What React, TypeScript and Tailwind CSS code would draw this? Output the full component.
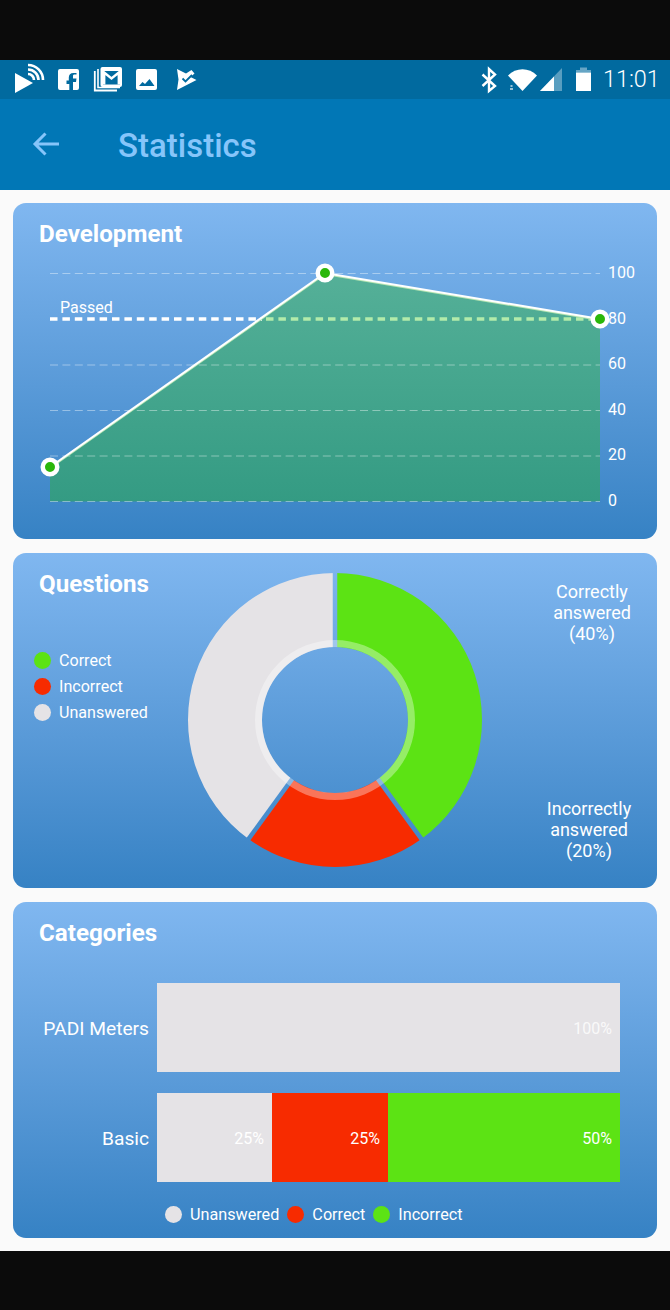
import React from "react";

const roboto = "font-['Roboto',sans-serif]";

function polar(r: number, a: number) {
  const t = (a * Math.PI) / 180;
  return [335 + r * Math.sin(t), 720 - r * Math.cos(t)];
}
function slice(ro: number, ri: number, a0: number, a1: number) {
  const [x0, y0] = polar(ro, a0);
  const [x1, y1] = polar(ro, a1);
  const [x2, y2] = polar(ri, a1);
  const [x3, y3] = polar(ri, a0);
  const large = a1 - a0 > 180 ? 1 : 0;
  return `M${x0} ${y0}A${ro} ${ro} 0 ${large} 1 ${x1} ${y1}L${x2} ${y2}A${ri} ${ri} 0 ${large} 0 ${x3} ${y3}Z`;
}

function Card({ title, className, children }: { title?: string; className?: string; children?: React.ReactNode }) {
  return (
    <section className={`rounded-[13px] bg-gradient-to-b from-[#80b7f0] to-[#3682c4] text-white overflow-hidden ${className ?? ""}`}>
      {title && <h2 className="pl-[26px] pt-[15px] text-[24.2px] leading-[32px] font-bold">{title}</h2>}
      {children}
    </section>
  );
}

const DARK = "#016a9f";

function StatusIcons() {
  return (
    <svg width="200" height="39" viewBox="0 60 200 39" fill="#fff" className="block">
      <path d="M15 73L33 83L15 93Z" />
      <g fill="none" stroke="#fff" strokeWidth="2.600">
        <path d="M28 74a6 6 0 0 1 6 6" />
        <path d="M28 69.500a10.500 10.500 0 0 1 10.500 10.500" />
        <path d="M28 65a15 15 0 0 1 15 15" />
      </g>
      <path d="M60 69h17a2 2 0 0 1 2 2v17a2 2 0 0 1-2 2h-4v-8h3l.5-3.500h-3.500v-2.500c0-1 .5-1.500 1.500-1.500h2V73h-3c-3.200 0-4.700 2-4.700 4.500v3H66.500V84h2.800v6H60a2 2 0 0 1-2-2V71a2 2 0 0 1 2-2z" />
      <rect x="100.500" y="67" width="21.500" height="20" rx="2" />
      <rect x="103" y="71" width="17" height="13.500" fill={DARK} />
      <path d="M104.200 84.500V72.500l7.300 6 7.300-6v12" fill="none" stroke="#fff" strokeWidth="2.400" />
      <path d="M94.800 71v19.500H117" fill="none" stroke="#fff" strokeWidth="1.800" />
      <path d="M98 69v18.500h22" fill="none" stroke="#fff" strokeWidth="1.600" />
      <rect x="136" y="69" width="21" height="21" rx="2" />
      <path d="M139 86l3.500-4 2.500 2 4.500-5 5 7z" fill={DARK} />
      <path d="M177 69L186 73.500L191.500 70L194.500 73.500L190.500 77L196.500 80L177 90L178.500 79.500Z" />
      <path d="M182.500 78.500l3 3 6.500-6.500" fill="none" stroke={DARK} strokeWidth="1.800" />
    </svg>
  );
}

function RightStatus() {
  return (
    <div className="flex items-center">
      <svg width="125" height="39" viewBox="475 60 125 39" fill="#fff" className="block">
        <path d="M482.500 74.500L495 86L489 91V69L495 74.500L482.500 86" fill="none" stroke="#fff" strokeWidth="2.400" />
        <path d="M508 75.500C516 67 529 67 537 75.500L522.500 91Z" />
        <rect x="510.500" y="85" width="2" height="2" fillOpacity="0.6" />
        <rect x="510" y="88" width="3" height="2" fillOpacity="0.6" />
        <path d="M540 91L562 68V91Z" fillOpacity="0.35" />
        <path d="M540 91L554 76.500V91Z" />
        <path d="M580 67.500h7v2.500h4v2.500h-15V70h4z" fillOpacity="0.4" />
        <path d="M576 72.500h15V91h-15z" />
      </svg>
      <span className="ml-[3px] text-[23.400px] leading-none font-light w-[56px]">11:01</span>
    </div>
  );
}

function LineChart() {
  const ys = [273.5, 365, 410.5, 456, 501.5];
  const labels: [string, number][] = [["100", 273], ["80", 319], ["60", 364], ["40", 410], ["20", 455], ["0", 501]];
  return (
    <svg width="644" height="281" viewBox="13 258 644 281" className="block">
      <defs>
        <linearGradient id="area" x1="0" y1="273" x2="0" y2="502" gradientUnits="userSpaceOnUse">
          <stop offset="0" stopColor="#55b098" />
          <stop offset="1" stopColor="#349b83" />
        </linearGradient>
      </defs>
      <path d="M50 467L325 273L600 319V501.500H50Z" fill="url(#area)" />
      {ys.map((y) => (
        <line key={y} x1="50" x2="600" y1={y} y2={y} stroke="#fff" strokeOpacity="0.4" strokeDasharray="8 4.400" strokeWidth="1" />
      ))}
      <line x1="50" x2="262" y1="319" y2="319" stroke="#fff" strokeWidth="3.500" strokeDasharray="7.500 4.900" />
      <line x1="262" x2="600" y1="319" y2="319" stroke="#b3ebaa" strokeWidth="3.500" strokeDasharray="7.500 4.900" strokeDashoffset="-4" />
      <path d="M50 468L325 274L600 320" fill="none" stroke="#b9e6b3" strokeWidth="2" />
      <path d="M50 467L325 273L600 319" fill="none" stroke="#fff" strokeWidth="2" />
      {[[50, 467], [325, 273], [600, 319]].map(([x, y]) => (
        <circle key={x} cx={x} cy={y} r="7.250" fill="#2ab70a" stroke="#fff" strokeWidth="4.500" />
      ))}
      <text x="60" y="313" fontSize="16" fill="#fff" fontFamily="Roboto, sans-serif">Passed</text>
      {labels.map(([t, y]) => (
        <text key={t} x="608" y={y + 5} fontSize="16" fill="#fff" fontFamily="Roboto, sans-serif">{t}</text>
      ))}
    </svg>
  );
}

function Donut() {
  return (
    <svg width="294" height="294" viewBox="188 573 294 294" className="block shrink-0">
      <defs>
        <mask id="gaps" maskUnits="userSpaceOnUse" x="188" y="573" width="294" height="294">
          <rect x="188" y="573" width="294" height="294" fill="#fff" />
          {[0, 144, 216].map((a) => {
            const [x, y] = polar(160, a);
            return <line key={a} x1="335" y1="720" x2={x} y2={y} stroke="#000" strokeWidth="4.500" />;
          })}
        </mask>
      </defs>
      <g mask="url(#gaps)">
        <path d={slice(147, 73, 0, 144)} fill="#5ce314" />
        <path d={slice(147, 73, 144, 216)} fill="#f72b00" />
        <path d={slice(147, 73, 216, 360)} fill="#e5e3e6" />
      </g>
      <circle cx="335" cy="720" r="76.500" fill="none" stroke="#fff" strokeOpacity="0.35" strokeWidth="7" />
    </svg>
  );
}

function Dot({ color, size = 17 }: { color: string; size?: number }) {
  return <span className={`block rounded-full ${color}`} style={{ width: size, height: size }} />;
}

function Bar({ label, segs }: { label: string; segs: { w: string; c: string; t: string; tc?: string }[] }) {
  return (
    <div className="flex items-center h-[89px]">
      <div className="w-[136px] text-right text-[19.200px] leading-none shrink-0 pt-[2px]">{label}</div>
      <div className="ml-[8px] w-[463px] h-full flex">
        {segs.map((s) => (
          <div key={s.c} className={`${s.w} ${s.c} h-full flex items-center justify-end pr-[8px] pt-[2px] text-[16px] ${s.tc ?? "text-white"}`}>{s.t}</div>
        ))}
      </div>
    </div>
  );
}

export default function App() {
  return (
    <div className={`w-[670px] h-[1310px] flex flex-col bg-[#0b0b0b] text-white ${roboto}`}>
      <div className="h-[60px] shrink-0" />
      <div className="h-[39px] shrink-0 bg-[#016a9f] flex items-center justify-between pr-[11px]">
        <StatusIcons />
        <RightStatus />
      </div>
      <header className="h-[91px] shrink-0 bg-[#0177b6] flex items-center text-[#86c5fa]">
        <svg width="28" height="24" viewBox="0 0 28 24" className="ml-[32px] mb-[2px]" fill="none" stroke="#86c5fa" strokeWidth="3">
          <path d="M27 12H3M13.500 1.500L3 12l10.500 10.500" />
        </svg>
        <h1 className="ml-[58px] text-[33px] font-medium leading-none mt-[2px]">Statistics</h1>
      </header>
      <main className="h-[1061px] shrink-0 bg-[#fafafa] px-[13px] pt-[13px] flex flex-col gap-[14px]">
        <Card title="Development" className="h-[336px]">
          <div className="mt-[8px]"><LineChart /></div>
        </Card>
        <Card className="h-[335px] flex">
          <div className="w-[175px] shrink-0">
            <h2 className="pl-[26px] pt-[15px] text-[24.2px] leading-[32px] font-bold">Questions</h2>
            <ul className="mt-[52px] pl-[21px] flex flex-col gap-[9px] text-[16.100px] leading-[17px]">
              <li className="flex items-center gap-[8px]"><Dot color="bg-[#5ce314]" />Correct</li>
              <li className="flex items-center gap-[8px]"><Dot color="bg-[#f72b00]" />Incorrect</li>
              <li className="flex items-center gap-[8px]"><Dot color="bg-[#e5e3e6]" />Unanswered</li>
            </ul>
          </div>
          <div className="pt-[20px]"><Donut /></div>
          <div className="flex-1 flex flex-col justify-between text-center text-[18px] leading-[21px] pt-[28px] pb-[27px]">
            <div className="w-[120px] ml-[50px]">Correctly<br />answered<br />(40%)</div>
            <div className="w-[120px] ml-[47px]">Incorrectly<br />answered<br />(20%)</div>
          </div>
        </Card>
        <Card title="Categories" className="h-[336px]">
          <div className="mt-[34px] flex flex-col gap-[21px]">
            <Bar label="PADI Meters" segs={[{ w: "w-full", c: "bg-[#e5e3e6]", t: "100%", tc: "text-[#ffffffcc]" }]} />
            <Bar label="Basic" segs={[
              { w: "w-[115px]", c: "bg-[#e5e3e6]", t: "25%" },
              { w: "w-[116px]", c: "bg-[#f72b00]", t: "25%" },
              { w: "w-[232px]", c: "bg-[#5ce314]", t: "50%" },
            ]} />
          </div>
          <div className="mt-[24px] ml-[152px] flex items-center text-[16.200px] leading-[17px]">
            <Dot color="bg-[#e5e3e6]" /><span className="ml-[8px] mr-[8px]">Unanswered</span>
            <Dot color="bg-[#f72b00]" /><span className="ml-[8px] mr-[8px]">Correct</span>
            <Dot color="bg-[#5ce314]" /><span className="ml-[8px]">Incorrect</span>
          </div>
        </Card>
      </main>
      <div className="flex-1" />
    </div>
  );
}
